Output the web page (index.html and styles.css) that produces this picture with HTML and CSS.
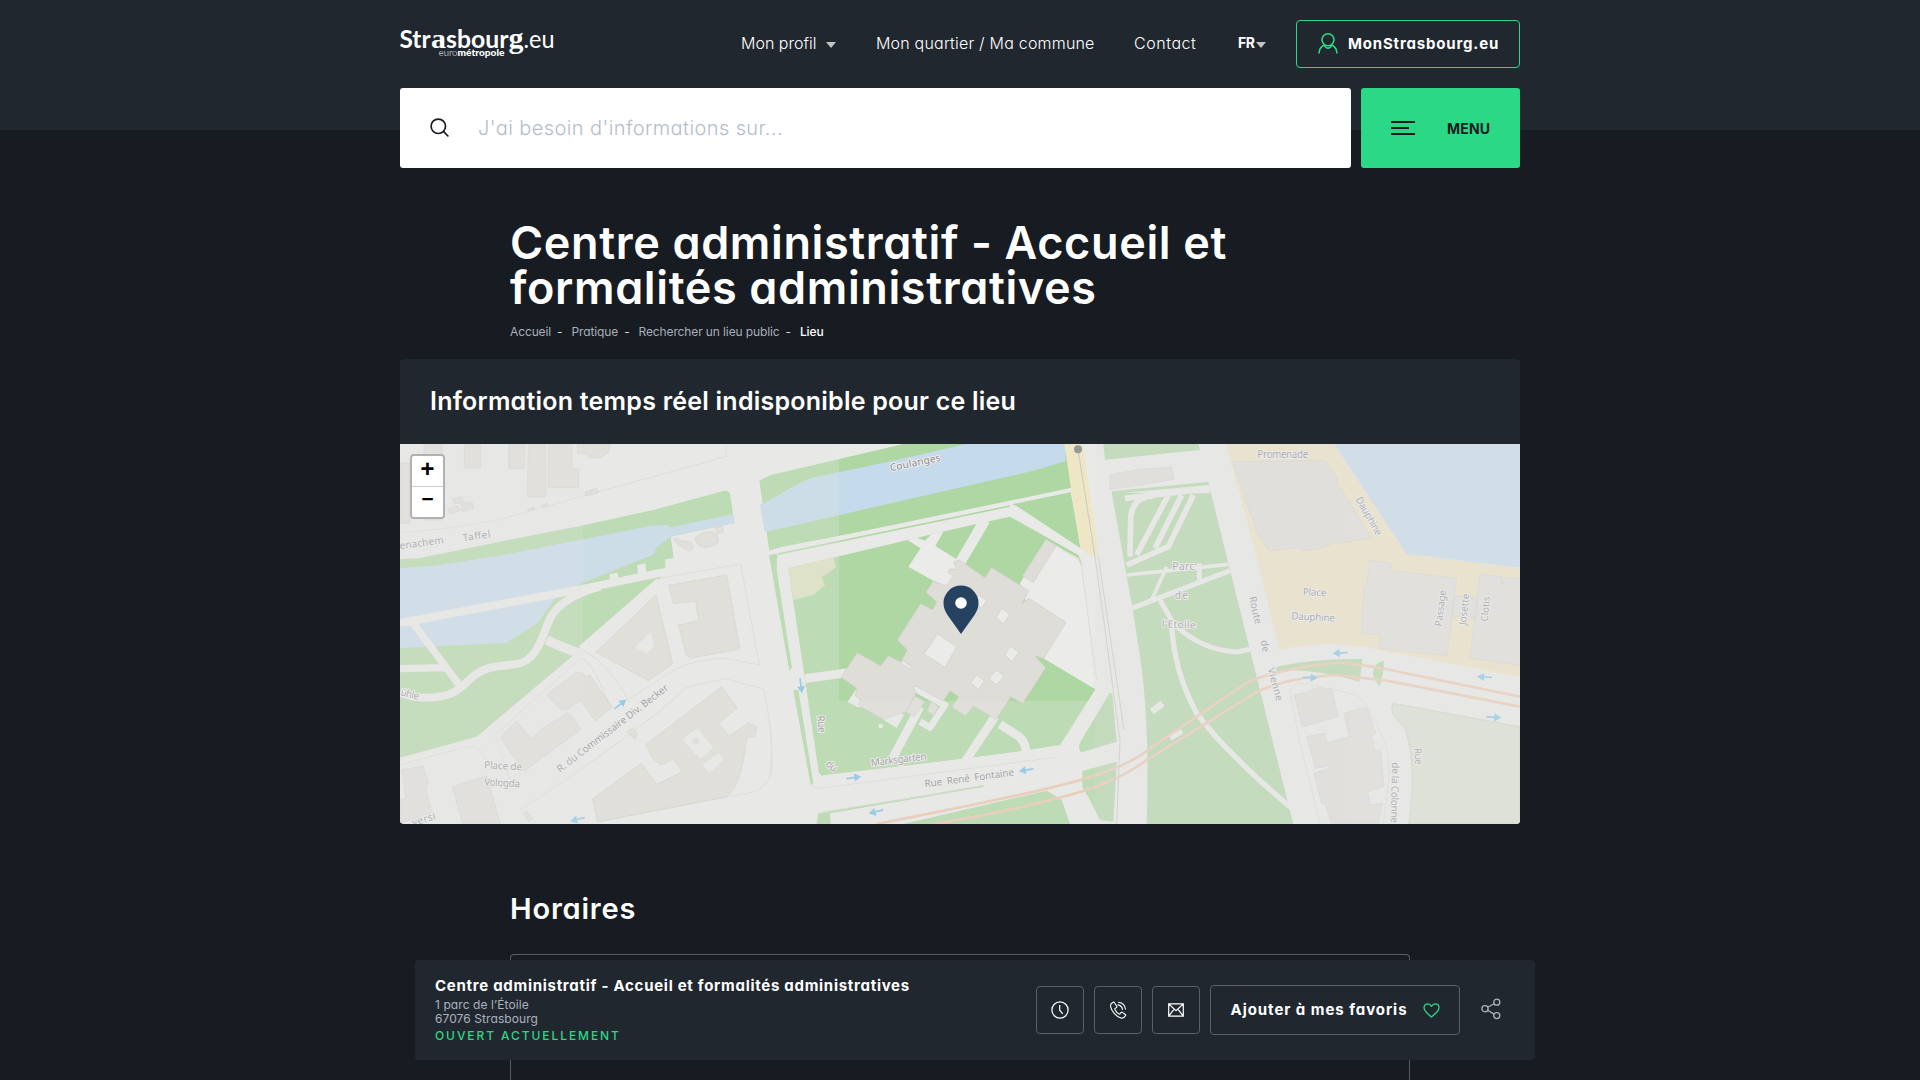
FILE: index.html
```html
<!DOCTYPE html>
<html lang="fr">
<head>
<meta charset="utf-8">
<title>Centre administratif - Accueil et formalités administratives</title>
<link rel="stylesheet" href="styles.css">
</head>
<body>
<header class="header">
  <div class="wrap">
    <div class="topbar">
      <a class="logo" aria-label="Strasbourg.eu">
        <svg width="156" height="36" viewBox="0 0 156 36" fill="#fff">
          <g font-family="Lato, sans-serif" font-size="25.5" font-weight="700">
            <text x="-0.5" y="24" textLength="31" lengthAdjust="spacingAndGlyphs">Str</text>
            <text x="31" y="24" font-family="'Liberation Serif', serif" font-weight="700" font-size="28" textLength="15" lengthAdjust="spacingAndGlyphs">a</text>
            <text x="46" y="24" textLength="62.5" lengthAdjust="spacingAndGlyphs">sbour</text>
            <text x="108.5" y="24" font-family="'Liberation Serif', serif" font-weight="700" font-size="29" textLength="15" lengthAdjust="spacingAndGlyphs">g</text>
            <text x="123.5" y="24" font-weight="400" textLength="31" lengthAdjust="spacingAndGlyphs">.eu</text>
          </g>
          <g font-family="Lato, sans-serif" font-size="9.5">
            <text x="38.8" y="32" font-weight="300" textLength="18.5" lengthAdjust="spacingAndGlyphs">euro</text>
            <text x="57.5" y="32" font-weight="900" textLength="47" lengthAdjust="spacingAndGlyphs">métropole</text>
          </g>
        </svg>
      </a>
      <nav class="nav">
        <a class="nav-profile">Mon profil<i class="caret"></i></a>
        <a class="nav-area">Mon quartier / Ma commune</a>
        <a class="nav-contact">Contact</a>
        <a class="nav-lang">FR<i class="caret"></i></a>
        <a class="account">
          <svg width="20" height="21" viewBox="0 0 20 21" fill="none" stroke="#2bd885" stroke-width="1.6"><circle cx="10" cy="6.8" r="6"/><path d="M1 20.500c.2-4.300 2.300-7.300 5.200-8.600 1 2.100 2.200 3.200 3.800 3.200s2.800-1.100 3.800-3.200c2.900 1.300 5 4.300 5.200 8.600"/></svg>
          <span>MonStrasbourg.eu</span>
        </a>
      </nav>
    </div>
    <div class="searchbar">
      <div class="search">
        <svg width="20" height="20" viewBox="0 0 20 20" fill="none" stroke="#181b22" stroke-width="1.700"><circle cx="8.300" cy="8.300" r="7.200"/><path d="M13.400 13.400l5 5.100"/></svg>
        <span>J'ai besoin d'informations sur...</span>
      </div>
      <a class="menu"><span class="burger"><i></i><i></i><i></i></span><span>MENU</span></a>
    </div>
  </div>
</header>
<main class="wrap">
  <section class="intro">
    <h1>Centre administratif - Accueil et<br><span>formalités administratives</span></h1>
    <p class="crumbs"><a>Accueil</a><a>Pratique</a><a>Rechercher un lieu public</a><b>Lieu</b></p>
  </section>
  <section class="place">
    <h2>Information temps réel indisponible pour ce lieu</h2>
    <div class="map">
      <svg class="tiles" viewBox="0 12 3360 1140" preserveAspectRatio="none">
        <defs>
          <path id="arrow" d="M-22-2.500H2V-12L23 0 2 12V2.500H-22z" fill="#7fc2e6"/>
        </defs>
        <rect y="12" width="3360" height="1140" fill="#e9e9e8"/>
        <!-- west bank -->
        <g>
          <path class="green" d="M0 358L60 354 300 305 540 258 760 210 970 153Q988 150 991 165L1003 250 815 290 822 376 780 415 540 622 515 650 230 890 0 953z"/>
          <path class="water" d="M0 385L100 378 310 345 540 300 750 258 805 255 808 263 1000 222 1004 250 815 288 770 322 762 343 540 432 465 475 412 550 320 608 0 624z"/>
          <path class="pave" d="M812 290L1003 250 1017 338 825 376zM628 402l26-4 2 30h-26zM711 375l25-5 4 36h-26zM795 358l26-4 4 40h-28z"/>
          <g class="road">
            <path stroke-width="24" d="M0 549L540 448 1020 350"/>
            <path stroke-width="22" d="M40 550L185 745M0 686L135 683"/>
            <path stroke-width="24" d="M600 440Q465 475 440 560C420 615 400 665 350 672C300 680 265 675 225 705C190 730 175 773 80 773Q40 773 0 758"/>
            <path stroke-width="28" d="M440 600Q480 620 540 640M780 425L545 630"/>
          </g>
          <g class="line">
            <path d="M0 278Q230 260 350 225L560 165 978 50V12M0 975L200 920Q240 912 258 965M285 885L540 655Q570 650 625 785M285 885L330 1020M780 415L1022 372 1078 675 980 655Q900 655 830 685L690 775M545 630Q620 660 690 790M360 1110Q700 890 860 742L975 716 1090 746Q1115 850 1117 980Q1110 1050 1040 1060L590 1146"/>
          </g>
          <g class="bld">
            <path d="M0 70H30V250H0zM72 12h54v228h-54zM193 12h48v72h-48zM326 12h48v74h-48zM385 12h52v158h-55zM446 12h70v75h20v56h-92zM532 12h100l-8 26-22 15h-36l-6-10-27-3zM555 156l35-11 6 12-35 12zM143 206l30-9 7 14-30 10zM157 177l28-7 8 16-28 6zM182 192l34-7 4 20-34 9zM382 210l18-9 4 9zM422 199l20-9 3 10z"/>
            <path d="M820 297q13-8 22 5l14 2q20-4 25 17-10 14-20 10l-30-18zM885 295q10-20 55-20 20 15 13 35-10 10-38 12-25 0-30-27zM946 263l20-6 5 18-18 6z"/>
            <path d="M806 436L980 405 1020 628 870 654 858 645 835 555 895 542 887 484 820 491zM768 464L818 671 746 722 588 637zM440 765L530 696 550 700 556 710 570 706 637 802 585 843 543 783 520 795 510 805 484 811zM303 896L312 880 350 842 387 888 386 898 403 890 425 868 500 820 515 828 543 868 372 994zM5 990L70 978 85 1030 78 1045 95 1118 0 1150V1080L18 1075zM157 1040L260 1008 302 1152H188zM737 914L965 740 1012 803 957 850 987 888 1046 848 1070 860 1065 890 1040 892Q1025 1040 980 1070L592 1146 578 1076 725 970 770 1033 848 995 820 958 783 975 760 957zM680 875l18-11 15 18-8 16zM370 1118l10-5 18 22-12 12z"/>
          </g>
          <path class="pave" d="M752 575L762 620 740 641 706 621zM893 865L940 923 900 957 847 898zM957 938L971 961 928 998 906 975z"/>
          <path d="M879 895l14-3 5 16-10 8-10-7z" fill="#dfddd8"/>
        </g>
        <!-- administrative centre -->
        <g transform="translate(1110 0)">
          <path class="green" d="M-32 122L0 106 400 12H885L905 143 720 190 30 322-2 333zM-3 345L22 341 20 390 66 683 58 692zM70 750L85 750 130 1030 122 1035zM720 190L902 155 932 325 740 198z"/>
          <path class="water" d="M-30 195L0 180 60 145 120 115 370 62 590 12H885L887 63 790 92 0 273-16 276z"/>
          <path class="green" d="M55 385L530 272 660 243 720 230 925 345 937 375 975 750 870 915 740 935 160 1010 147 1000zM1010 760L1027 760 1040 905 935 937 928 930V900zM140 1152L145 1120 640 1036V1041L180 1120 182 1152zM400 1152L830 1052 875 1080 900 1152zM937 993L1040 965 1030 1145 990 1140 960 1080 937 1040z"/>
          <path fill="#dce1c1" d="M55 385L190 350 198 380 180 396 155 410 165 435 130 465 70 480z"/>
          <path d="M25 342L720 198" stroke="#afd7a3" stroke-width="5"/>
          <path fill="#efe6c6" d="M883 12H938L987 348H960L930 320z"/>
          <path fill="#ebebea" d="M750 430L830 300 925 355 940 385 975 747 820 655zM415 380L452 325 412 300 440 293 465 302 485 282 520 275 496 318 560 358 575 380 530 440 490 422z"/>
          <g class="road">
            <path stroke-width="12" d="M-5 338L900 151"/>
            <path stroke-width="32" d="M645 240L570 368"/>
            <path stroke-width="26" d="M105 716L235 698M450 800L365 960M675 830L585 965M690 853L735 882Q770 900 768 945"/>
            <path stroke-width="42" d="M1000 750L895 925"/>
            <path stroke-width="20" d="M428 742L525 795 480 862 450 845"/>
            <path stroke-width="28" d="M160 1020L800 945"/>
          </g>
          <path class="pave" d="M233 785L262 742 275 800 262 802zM338 838L368 805 402 825 380 864z"/>
          <circle cx="332" cy="858" r="7" fill="#e9e9e8"/>
          <g class="bld">
            <path d="M468 457L490 424 530 438 548 408 533 395 540 387 560 388 551 366 568 360 645 413 665 383 776 452 755 493 776 475 888 547 822 655 794 648 827 683 758 790 722 770 678 838 610 797 587 827 546 802 566 770 540 752 520 783 440 740 428 738 438 758 408 815 340 838 265 795 272 778 256 768 260 745 213 712 262 638 332 678 355 648 393 666 412 630 382 600 452 491 488 510 500 485z"/>
            <path d="M828 298L858 318 790 428 758 408zM435 767L464 785 433 830 408 815zM485 785L505 800 490 825 472 812z"/>
          </g>
          <path class="court" d="M503 582L560 620 525 682 462 642zM695 505L720 522 700 552 678 533zM722 618L746 638 725 665 704 645zM680 690L702 708 680 735 658 715zM622 705L643 724 625 748 602 728zM625 465L650 480 635 505 615 490zM398 662L427 682 422 688 393 670z"/>
          <g class="line">
            <path d="M860 318L925 360Q935 370 937 400L980 720M120 1030Q125 1045 150 1045L855 952M640 1040L160 1115M0 850Q10 930 0 1010"/>
          </g>
          <path d="M924 28L975 350 1050 900 1040 1152M985 350L1062 870" fill="none" stroke="#c9c9c4" stroke-width="3"/>
          <circle cx="924" cy="28" r="12" fill="#989898"/>
        </g>
        <!-- park and Place Dauphine -->
        <g transform="translate(2220 0)">
          <path class="green" d="M-110 12H175L180 30-105 60zM-85 158L205 127 265 370 460 1152H20Q30 850 0 650L-20 520z"/>
          <path class="pave" d="M-105 60L180 30 210 160-90 158z"/>
          <path class="green" d="M-85 154L203 126 205 135-83 162z"/>
          <path fill="#ebe1c1" d="M258 12H580L800 342 1140 383V710L720 630Q560 595 418 630L345 330z"/>
          <path class="water" d="M582 12H1140V383L800 342z"/>
          <path fill="#d9decf" d="M760 790L1140 860V1152H806Q832 980 795 865Q755 830 755 805z" stroke="#c5c7bf" stroke-width="2"/>
          <path class="green" d="M408 700L410 680Q520 655 668 657L658 725Q540 690 440 690zM699 705Q700 665 732 664 732 700 718 740z"/>
          <g class="road">
            <path stroke-width="17" d="M-40 375L85 320 160 165M-30 350L-28 230Q-20 170 40 168M-10 345L85 165M45 325L125 165M-45 175L210 145"/>
            <path stroke-width="11" d="M-40 405L265 373M35 480L80 380"/>
            <path stroke-width="15" d="M-25 505L270 392M60 480L100 550Q180 630 290 636L340 626M178 370V430"/>
            <path stroke-width="16" d="M95 550Q100 690 170 820Q260 940 455 1105"/>
            <path stroke-width="20" d="M35 815L68 790M90 893L125 872"/>
          </g>
          <g class="bld">
            <path d="M278 65L555 62 592 115V130L695 295 575 312 530 328 482 332 475 323 388 332 350 275zM690 360L755 370 752 392 950 415 920 647 717 625 720 585 665 578 672 440 680 435zM1020 403L1085 410V432H1090L1094 412 1142 416V677L990 655zM943 468L1012 475 1005 535 936 528zM463 765L490 760 540 740 545 747 575 745 594 830 487 860zM500 890L555 880 562 908 628 890 612 820 680 802 708 880 695 885 705 930 722 930 732 1040 683 1055 690 1095 728 1090 715 1152H575L555 1090H545L522 1000 570 985 568 977 527 985zM-90 105L0 88 95 82 102 118 0 135-90 148z"/>
          </g>
          <path class="line" d="M800 840l10-6 11 10-6 13-12-3zM960 1036l16-6 10 12-8 10-18-3z"/>
          <path class="line" d="M540 1152L478 900 450 760Q455 730 490 730L640 762Q665 772 680 802Q750 900 748 1000L730 1152"/>
        </g>
        <!-- tram tracks -->
        <g fill="none" stroke="#ebc6ae" stroke-width="8">
          <path d="M1430 1152Q1800 1080 1930 1048Q2170 995 2250 925L2540 728Q2640 685 2810 668Q2880 672 2970 690L3360 770"/>
          <path d="M1600 1152Q1800 1120 1970 1075Q2140 1035 2240 960L2560 762Q2640 715 2810 705L2960 722 3360 800"/>
        </g>
        <use href="#arrow" transform="translate(661 793) rotate(-38)"/>
        <use href="#arrow" transform="translate(533 1138) rotate(166)"/>
        <use href="#arrow" transform="translate(1203 737) rotate(82)"/>
        <use href="#arrow" transform="translate(1361 1013) rotate(-8)"/>
        <use href="#arrow" transform="translate(1879 990) rotate(171)"/>
        <use href="#arrow" transform="translate(1428 1115) rotate(166)"/>
        <use href="#arrow" transform="translate(2821 639) rotate(176)"/>
        <use href="#arrow" transform="translate(2730 713) rotate(3)"/>
        <use href="#arrow" transform="translate(3254 711) rotate(184)"/>
        <use href="#arrow" transform="translate(3281 832) rotate(4)"/>
        <g class="names">
          <text transform="translate(0 328) rotate(-8)" textLength="133">enachem</text>
          <text transform="translate(190 304) rotate(-8)" textLength="83">Taffel</text>
          <text transform="translate(0 766) rotate(14)" textLength="56">ühle</text>
          <text transform="translate(252 985) rotate(3)" textLength="114">Place de</text>
          <text transform="translate(252 1036) rotate(3)" textLength="108">Vologda</text>
          <text transform="translate(40 1158) rotate(-17)" textLength="72">versi</text>
          <text transform="translate(480 998) rotate(-37.500)" textLength="412">R. du Commissaire Div. Becker</text>
          <text transform="translate(1472 94) rotate(-12)" textLength="154">Coulanges</text>
          <text transform="translate(1252 827) rotate(86)" textLength="52">Rue</text>
          <text transform="translate(1275 975) rotate(40)" textLength="34">du</text>
          <text transform="translate(1414 979) rotate(-7)" textLength="168">Marksgarten</text>
          <text transform="translate(1575 1042) rotate(-7.500)" textLength="270" xml:space="preserve">Rue  René  Fontaine</text>
          <text x="2572" y="54" textLength="153">Promenade</text>
          <text transform="translate(2866 178) rotate(60)" textLength="128">Dauphine</text>
          <text x="2317" y="391" textLength="66">Parc</text>
          <text x="2324" y="478" textLength="40">de</text>
          <text transform="translate(2285 562) rotate(2)" textLength="102">l'Etoile</text>
          <text transform="translate(2547 472) rotate(77)" textLength="84">Route</text>
          <text transform="translate(2582 602) rotate(80)" textLength="36">de</text>
          <text transform="translate(2603 686) rotate(75)" textLength="102">Vienne</text>
          <text transform="translate(2708 466) rotate(2)" textLength="71">Place</text>
          <text transform="translate(2674 538) rotate(3)" textLength="130">Dauphine</text>
          <text transform="translate(3125 560) rotate(-83)" textLength="110">Passage</text>
          <text transform="translate(3197 556) rotate(-83)" textLength="95">Josette</text>
          <text transform="translate(3263 545) rotate(-85)" textLength="75">Clotis</text>
          <text transform="translate(3043 925) rotate(86)" textLength="50">Rue</text>
          <text transform="translate(2976 967) rotate(91)" textLength="182">de la Colonne</text>
        </g>
        <!-- tiles still fading in -->
        <g fill="#e4e4e3">
          <path opacity=".42" d="M0 12H549V1152H0zM2852 12H3360V1152H2852z"/>
          <path opacity=".27" d="M549 12H1317V1152H549zM1317 783H2085V1152H1317z"/>
          <path opacity=".4" d="M2085 12H2852V1152H2085z"/>
        </g>
      </svg>
      <div class="zoomctl"><a>+</a><a>−</a></div>
      <svg class="pin" width="36" height="50" viewBox="0 0 36 50"><path d="M18 .5A17.500 17.500 0 0 0 .5 18C.5 22.500 2 26 4.500 30L18 49 31.500 30C34 26 35.500 22.500 35.500 18A17.500 17.500 0 0 0 18 .5z" fill="#254361"/><circle cx="18" cy="18" r="5.800" fill="#fff"/></svg>
    </div>
  </section>
  <section class="hours">
    <h2>Horaires</h2>
    <div class="hours-box"></div>
  </section>
</main>
<aside class="sticky">
  <div class="sticky-info">
    <strong>Centre administratif - Accueil et formalités administratives</strong>
    <span class="addr">1 parc de l’Étoile</span>
    <span class="addr">67076 Strasbourg</span>
    <span class="open">OUVERT ACTUELLEMENT</span>
  </div>
  <div class="actions">
    <a class="square"><svg width="18" height="18" viewBox="0 0 18 18" fill="none" stroke="#fff" stroke-width="1.200"><circle cx="9" cy="9" r="8.100"/><path d="M8.700 4v5.200l3 3.600"/></svg></a>
    <a class="square"><svg width="18" height="18" viewBox="0 0 18 18" fill="none" stroke="#fff" stroke-width="1.100" stroke-linejoin="round" stroke-linecap="round"><path d="M4.200 1.200c-1.800.8-3 2-2.600 4.100.8 4.700 5.400 10.200 10.300 11.700 2 .5 3.600-.6 4.600-2.200.3-.5.200-1-.2-1.300l-2.900-2.100c-.5-.4-1-.3-1.400.2l-.9 1.100c-.3.400-.8.500-1.200.2-1.700-1-3.100-2.700-4-4.500-.2-.5 0-.9.400-1.100l1.100-.7c.5-.3.600-.8.400-1.300L5.400 1.700c-.2-.5-.7-.7-1.200-.5zM9 3.900c2.600.4 4 1.900 4.500 4.500M9.500 1.200c4 .4 6.500 3 7 7.100"/></svg></a>
    <a class="square"><svg width="16" height="14" viewBox="0 0 16 14" fill="none" stroke="#fff" stroke-width="1.200"><path d="M.7.900h14.600v12.200H.7zM.9 1.100L8 7.800l7.100-6.700M.9 12.900l5.200-6.800M15.100 12.900L9.900 6.100"/></svg></a>
    <a class="fav"><span>Ajouter à mes favoris</span><svg width="17" height="15" viewBox="0 0 17 15" fill="none" stroke="#2bd885" stroke-width="1.300" stroke-linejoin="round"><path d="M8.500 14C5 11.200 1 8 1 4.700 1 2.500 2.600.9 4.700.9c1.700 0 3 1 3.800 2.500C9.300 1.900 10.600.9 12.300.9 14.400.9 16 2.500 16 4.700c0 3.300-4 6.500-7.500 9.300z"/></svg></a>
    <a class="share"><svg width="20" height="22" viewBox="0 0 20 22" fill="none" stroke="#abb3bf" stroke-width="1.300"><circle cx="4" cy="10.700" r="3.100"/><circle cx="15.800" cy="4.200" r="3"/><circle cx="15.800" cy="17.600" r="3"/><path d="M6.700 9.200l6.400-3.500M6.700 12.300l6.400 3.800"/></svg></a>
  </div>
</aside>
</body>
</html>
```

FILE: styles.css
```css
* { box-sizing: border-box; }
html, body { height: 100%; }
body {
  margin: 0;
  overflow: hidden;
  background: #171b22;
  color: #fff;
  font-family: Inter, "Liberation Sans", sans-serif;
  font-feature-settings: "cv11";
}
h1, h2, p { margin: 0; }
.wrap { width: 1120px; margin: 0 auto; }

.header { height: 130px; background: #21272f; }
.topbar { display: flex; justify-content: space-between; height: 88px; }
.logo { padding-top: 24px; }
.logo svg { display: block; overflow: visible; }
.nav {
  display: flex;
  align-items: center;
  font-size: 16px;
  font-weight: 300;
  line-height: 20px;
  white-space: nowrap;
}
.nav a { display: flex; align-items: center; padding-bottom: 2px; }
.caret {
  margin-top: 3px;
  border: 5px solid transparent;
  border-top: 6px solid #c4c4c4;
  border-bottom: 0;
}
.nav-profile .caret { margin-left: 10px; }
.nav-profile { width: 135px; }
.nav-area { width: 258px; letter-spacing: .2px; }
.nav-contact { width: 104px; letter-spacing: .55px; }
.nav-lang { width: 58px; font-size: 14px; font-weight: 700; letter-spacing: -.4px; }
.nav-lang .caret { margin-left: 1px; }
.nav .account {
  width: 224px;
  height: 48px;
  padding: 0 0 1px 21px;
  gap: 10px;
  border: 1px solid #2bd885;
  border-radius: 4px;
  font-size: 15px;
  font-weight: 700;
  letter-spacing: .82px;
}

.searchbar { display: flex; gap: 10px; height: 80px; }
.search {
  flex: 1;
  display: flex;
  align-items: center;
  gap: 28px;
  padding-left: 30px;
  border-radius: 3px;
  background: #fff;
  color: #b5bdca;
  font-size: 20px;
  font-weight: 300;
  letter-spacing: .4px;
}
.menu {
  display: flex;
  align-items: center;
  width: 159px;
  padding-left: 30px;
  gap: 32px;
  border-radius: 3px;
  background: #2bd885;
  color: #181b22;
  font-size: 14px;
  font-weight: 700;
  letter-spacing: .2px;
}
.burger { display: grid; gap: 4px; width: 24px; }
.burger i { height: 2px; background: #181b22; }
.burger i:nth-child(2) { width: 18px; }

.intro { padding: 90px 110px 0; }
h1 {
  font-size: 45px;
  line-height: 45px;
  font-weight: 600;
  letter-spacing: .63px;
  white-space: nowrap;
}
.crumbs {
  display: flex;
  margin-top: 14px;
  height: 16px;
  color: #a9afb9;
  font-size: 12px;
  line-height: 16px;
  letter-spacing: -.12px;
}
.crumbs a::after { content: "-"; margin: 0 9px 0 6px; color: #d5d5d5; }
.crumbs b { color: #fff; font-weight: 500; }

.place { margin-top: 19px; border-radius: 4px; overflow: hidden; background: #21272f; }
.place h2 {
  height: 85px;
  padding: 28px 30px 0;
  font-size: 25px;
  line-height: 29px;
  font-weight: 600;
  letter-spacing: .23px;
}
.map { position: relative; height: 380px; }
.tiles { display: block; width: 1120px; height: 380px; }
.green { fill: #afd7a3; }
.water { fill: #c5daea; }
.pave { fill: #e9e9e8; }
.road { fill: none; stroke: #e9e9e8; stroke-linejoin: round; }
.line { fill: none; stroke: #d9d9d5; stroke-width: 2.5; }
.bld { fill: #dfddd8; stroke: #d2cfca; stroke-width: 2; stroke-linejoin: round; }
.court { fill: #ebebea; stroke: #d2cfca; stroke-width: 2; }
.names {
  fill: #8c8c90;
  stroke: #eeeeed;
  stroke-width: 6px;
  stroke-linejoin: round;
  paint-order: stroke;
  font: 30px "Noto Sans", sans-serif;
}
.zoomctl {
  position: absolute;
  top: 10px;
  left: 10px;
  width: 35px;
  border: 2px solid #b1b1b0;
  border-radius: 4px;
  overflow: hidden;
}
.zoomctl a {
  display: block;
  height: 30px;
  background: #fff;
  color: #000;
  font: bold 24px/30px "Liberation Mono", monospace;
  text-align: center;
}
.zoomctl a:first-child { height: 31px; border-bottom: 1px solid #ccc; }
.zoomctl a:last-child { font-size: 21px; line-height: 28px; }
.pin { position: absolute; left: 542.5px; top: 140.5px; }

.hours { padding: 67px 110px 0; }
.hours h2 { height: 63px; font-size: 29px; line-height: 36px; font-weight: 600; letter-spacing: .8px; }
.hours-box { height: 126px; border: 1px solid #5a5c5e; border-bottom: 0; border-radius: 4px 4px 0 0; }

.sticky {
  position: fixed;
  left: 415px;
  top: 960px;
  width: 1120px;
  height: 100px;
  display: flex;
  justify-content: space-between;
  padding: 0 34px 0 20px;
  border-radius: 4px;
  background: #21272f;
}
.sticky-info { display: flex; flex-direction: column; padding-top: 16px; }
.sticky-info strong { font-size: 15px; line-height: 20px; font-weight: 700; letter-spacing: .72px; margin-bottom: 2px; }
.addr { color: #abb3bf; font-size: 12px; line-height: 14px; letter-spacing: .08px; }
.open { margin-top: 2px; color: #2bd885; font-size: 12px; line-height: 16px; font-weight: 500; letter-spacing: 1.92px; }
.actions { display: flex; align-items: center; }
.square, .fav {
  display: flex;
  align-items: center;
  justify-content: center;
  border: 1px solid #5c5f66;
  border-radius: 4px;
}
.square { width: 48px; height: 48px; margin-right: 10px; }
.fav { width: 250px; height: 50px; gap: 15px; font-size: 15px; font-weight: 700; letter-spacing: .95px; }
.fav span { padding-bottom: 1px; }
.share { display: flex; margin: 0 0 2px 21px; }
```
